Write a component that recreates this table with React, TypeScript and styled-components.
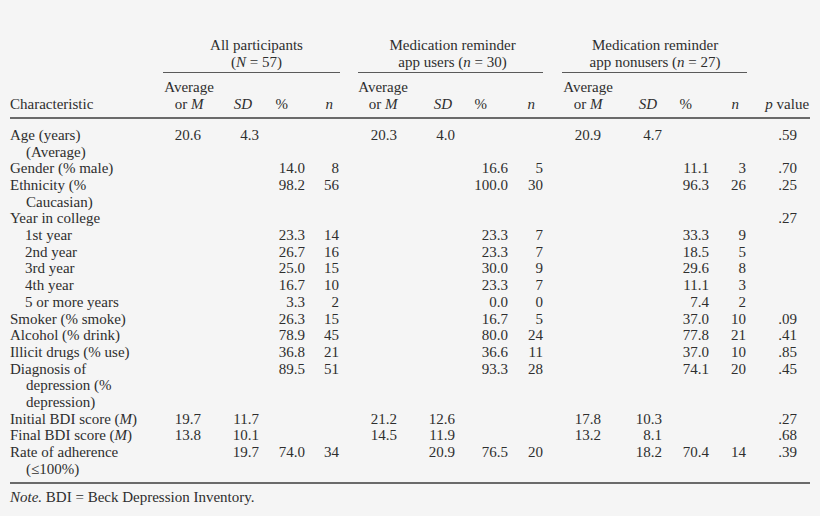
import * as React from "react";
import styled, { createGlobalStyle } from "styled-components";

const GlobalStyle = createGlobalStyle`
	html, body {
		margin: 0;
		padding: 0;
		background: #f5f5f5;
	}
	body {
		font-family: "Liberation Serif", "Times New Roman", serif;
		font-size: 15px;
		line-height: 16.7px;
		color: #2e2e2e;
	}
`;

interface Column {
	width: number;
	dataPad: number;
	headPad: number;
	label: React.ReactNode;
	center?: boolean;
}

const avgLabel = (
	<>
		Average
		<br />
		or <i>M</i>
	</>
);

// one entry per value column, left to right
const columns: Column[] = [
	{ width: 52, dataPad: 14, headPad: 0, label: avgLabel, center: true },
	{ width: 50, dataPad: 6, headPad: 13, label: <i>SD</i> },
	{ width: 47, dataPad: 7, headPad: 24, label: "%" },
	{ width: 38, dataPad: 11, headPad: 17, label: <i>n</i> },
	{ width: 66, dataPad: 19, headPad: 0, label: avgLabel, center: true },
	{ width: 49, dataPad: 10, headPad: 13, label: <i>SD</i> },
	{ width: 50, dataPad: 7, headPad: 28, label: "%" },
	{ width: 40, dataPad: 12, headPad: 20, label: <i>n</i> },
	{ width: 66, dataPad: 20, headPad: 0, label: avgLabel, center: true },
	{ width: 49, dataPad: 8, headPad: 13, label: <i>SD</i> },
	{ width: 46, dataPad: 7, headPad: 24, label: "%" },
	{ width: 39, dataPad: 9, headPad: 16, label: <i>n</i> },
	{
		width: 55,
		dataPad: 13,
		headPad: 1,
		label: (
			<>
				<i>p</i> value
			</>
		),
	},
];

const groups = [
	{
		title: (
			<>
				All participants
				<br />(<i>N</i> = 57)
			</>
		),
		left: 0,
		right: 10,
	},
	{
		title: (
			<>
				Medication reminder
				<br />
				app users (<i>n</i> = 30)
			</>
		),
		left: 8,
		right: 12,
	},
	{
		title: (
			<>
				Medication reminder
				<br />
				app nonusers (<i>n</i> = 27)
			</>
		),
		left: 7,
		right: 8,
	},
];

interface Row {
	label: React.ReactNode[];
	sub?: boolean;
	values: string[];
}

const e = "";
const pct = (a: string, b: string, c: string, d: string, f: string, g: string, p: string) => [
	e, e, a, b, e, e, c, d, e, e, f, g, p,
];

const rows: Row[] = [
	{
		label: ["Age (years)", "(Average)"],
		values: ["20.6", "4.3", e, e, "20.3", "4.0", e, e, "20.9", "4.7", e, e, ".59"],
	},
	{ label: ["Gender (% male)"], values: pct("14.0", "8", "16.6", "5", "11.1", "3", ".70") },
	{ label: ["Ethnicity (%", "Caucasian)"], values: pct("98.2", "56", "100.0", "30", "96.3", "26", ".25") },
	{ label: ["Year in college"], values: pct(e, e, e, e, e, e, ".27") },
	{ label: ["1st year"], sub: true, values: pct("23.3", "14", "23.3", "7", "33.3", "9", e) },
	{ label: ["2nd year"], sub: true, values: pct("26.7", "16", "23.3", "7", "18.5", "5", e) },
	{ label: ["3rd year"], sub: true, values: pct("25.0", "15", "30.0", "9", "29.6", "8", e) },
	{ label: ["4th year"], sub: true, values: pct("16.7", "10", "23.3", "7", "11.1", "3", e) },
	{ label: ["5 or more years"], sub: true, values: pct("3.3", "2", "0.0", "0", "7.4", "2", e) },
	{ label: ["Smoker (% smoke)"], values: pct("26.3", "15", "16.7", "5", "37.0", "10", ".09") },
	{ label: ["Alcohol (% drink)"], values: pct("78.9", "45", "80.0", "24", "77.8", "21", ".41") },
	{ label: ["Illicit drugs (% use)"], values: pct("36.8", "21", "36.6", "11", "37.0", "10", ".85") },
	{
		label: ["Diagnosis of", "depression (%", "depression)"],
		values: pct("89.5", "51", "93.3", "28", "74.1", "20", ".45"),
	},
	{
		label: [
			<>
				Initial BDI score (<i>M</i>)
			</>,
		],
		values: ["19.7", "11.7", e, e, "21.2", "12.6", e, e, "17.8", "10.3", e, e, ".27"],
	},
	{
		label: [
			<>
				Final BDI score (<i>M</i>)
			</>,
		],
		values: ["13.8", "10.1", e, e, "14.5", "11.9", e, e, "13.2", "8.1", e, e, ".68"],
	},
	{
		label: ["Rate of adherence", "(≤100%)"],
		values: [e, "19.7", "74.0", "34", e, "20.9", "76.5", "20", e, "18.2", "70.4", "14", ".39"],
	},
];

const Page = styled.div`
	padding: 37px 10px 0 10px;
	width: 800px;
`;

const Table = styled.table`
	width: 800px;
	table-layout: fixed;
	border-collapse: collapse;
	border-spacing: 0;
`;

const Head = styled.th<{ $pad?: number; $center?: boolean }>`
	font-weight: normal;
	padding: 0 ${(p) => p.$pad ?? 0}px 0 0;
	text-align: ${(p) => (p.$center ? "center" : "right")};
	vertical-align: bottom;
	white-space: nowrap;
`;

const GroupHead = styled.th`
	font-weight: normal;
	padding: 0;
	text-align: center;
	vertical-align: top;
	white-space: nowrap;
`;

const GroupRule = styled.div<{ $left: number; $right: number }>`
	margin: 2px ${(p) => p.$right}px 0 ${(p) => p.$left}px;
	border-top: 1.5px solid #5a5a5a;
`;

const SubHeadRow = styled.tr`
	th {
		padding-top: 6px;
		padding-bottom: 4px;
		border-bottom: 2px solid #6a6a6a;
	}
`;

const LabelHead = styled(Head)`
	text-align: left;
`;

const BodyRow = styled.tr<{ $first?: boolean; $last?: boolean }>`
	td {
		padding-top: ${(p) => (p.$first ? 8 : 0)}px;
		padding-bottom: ${(p) => (p.$last ? 4 : 0)}px;
		border-bottom: ${(p) => (p.$last ? "2px solid #6a6a6a" : "none")};
	}
`;

const LabelCell = styled.td<{ $sub?: boolean }>`
	padding-left: ${(p) => (p.$sub ? 15 : 0)}px;
	vertical-align: top;
	white-space: nowrap;
`;

const LabelLine = styled.div<{ $cont?: boolean }>`
	padding-left: ${(p) => (p.$cont ? 16 : 0)}px;
`;

const ValueCell = styled.td<{ $pad: number }>`
	padding: 0 ${(p) => p.$pad}px 0 0;
	text-align: right;
	vertical-align: top;
	white-space: nowrap;
`;

const Note = styled.p`
	margin: 5px 0 0 0;
`;

export default function App() {
	return (
		<Page>
			<GlobalStyle />
			<Table>
				<colgroup>
					<col style={{ width: 153 }} />
					{columns.map((c, i) => (
						<col key={i} style={{ width: c.width }} />
					))}
				</colgroup>
				<thead>
					<tr>
						<GroupHead />
						{groups.map((g, i) => (
							<GroupHead key={i} colSpan={4}>
								{g.title}
								<GroupRule $left={g.left} $right={g.right} />
							</GroupHead>
						))}
						<GroupHead />
					</tr>
					<SubHeadRow>
						<LabelHead>Characteristic</LabelHead>
						{columns.map((c, i) => (
							<Head key={i} $pad={c.headPad} $center={c.center}>
								{c.label}
							</Head>
						))}
					</SubHeadRow>
				</thead>
				<tbody>
					{rows.map((r, i) => (
						<BodyRow key={i} $first={i === 0} $last={i === rows.length - 1}>
							<LabelCell $sub={r.sub}>
								{r.label.map((l, j) => (
									<LabelLine key={j} $cont={j > 0}>
										{l}
									</LabelLine>
								))}
							</LabelCell>
							{r.values.map((v, j) => (
								<ValueCell key={j} $pad={columns[j].dataPad}>
									{v}
								</ValueCell>
							))}
						</BodyRow>
					))}
				</tbody>
			</Table>
			<Note>
				<i>Note.</i> BDI = Beck Depression Inventory.
			</Note>
		</Page>
	);
}
